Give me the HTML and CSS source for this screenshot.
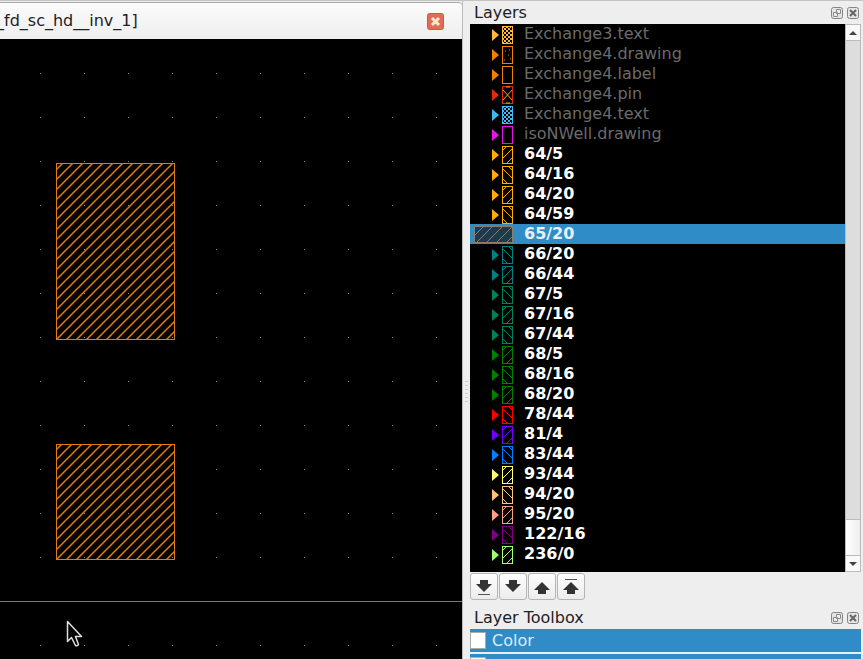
FILE: index.html
```
<!DOCTYPE html>
<html lang="en">
<head>
  <meta charset="UTF-8" />
  <meta name="viewport" content="width=device-width, initial-scale=1.0"/>
  <title>Layout Viewer</title>
  <link rel="stylesheet" href="styles.css">
</head>
<body>

<!-- Shared icons -->
<svg class="defs" aria-hidden="true">
  <symbol id="plain" viewBox="0 0 40 20">
    <path d="M18 5l7 6-7 6z" fill="currentColor"/>
    <rect x="28.500" y="2.500" width="10" height="17" fill="none" stroke="currentColor"/>
  </symbol>
  <symbol id="rise" viewBox="0 0 40 20">
    <use href="#plain"/>
    <path d="M29 14l9-9M29 6l3-3M33 19l5-5" fill="none" stroke="currentColor"/>
  </symbol>
  <symbol id="fall" viewBox="0 0 40 20">
    <use href="#plain"/>
    <path d="M29 5l9 9M29 15l4 4M35 3l3 3" fill="none" stroke="currentColor"/>
  </symbol>
  <symbol id="dots" viewBox="0 0 40 20">
    <use href="#plain"/>
    <path d="M31 7h1M35 6h1M34 11h1M30 16h1M36 15h1" stroke="currentColor"/>
  </symbol>
  <symbol id="cross" viewBox="0 0 40 20">
    <use href="#plain"/>
    <path d="M29 6l9 10M38 6l-9 10M32 3h4M32 19h4" stroke="#ff9a1f"/>
  </symbol>
  <symbol id="mesh" viewBox="0 0 40 20">
    <use href="#plain"/>
    <path d="M29 7l4-4M29 11l8-8M29 15l9-9M29 19l9-9M33 19l5-5M29 15l4 4M29 11l8 8M29 7l9 9M29 3l9 9M33 3l5 5" fill="none" stroke="currentColor"/>
  </symbol>
  <symbol id="float" viewBox="0 0 12 12">
    <rect x="0.500" y="0.500" width="11" height="11" rx="2" fill="#e4e4e4" stroke="#858585"/>
    <path d="M5.500 2.500h4v4h-4zM2.500 5.500h4v4h-4z" fill="#eee" stroke="#8a8a8a"/>
  </symbol>
  <symbol id="close" viewBox="0 0 12 12">
    <rect x="0.500" y="0.500" width="11" height="11" rx="2" fill="#e4e4e4" stroke="#858585"/>
    <path d="M3 3l6 6M9 3l-6 6" stroke="#666" stroke-width="2"/>
  </symbol>
</svg>

<div class="app">
  <main class="view">
    <header class="view-title">
      <span>_fd_sc_hd__inv_1]</span>
      <button class="view-close" aria-label="Close view">
        <svg width="17" height="17"><rect x="0.500" y="0.500" width="16" height="16" rx="2" fill="#e26c55" stroke="#cc5a45"/><path d="M5 5l7 7M12 5l-7 7" stroke="#ffe9cf" stroke-width="3"/></svg>
      </button>
    </header>
    <svg class="canvas" role="img" aria-label="Cell layout">
      <defs>
        <pattern id="grid" width="44" height="44" x="40" y="34" patternUnits="userSpaceOnUse">
          <rect width="1" height="1" fill="#888"/>
        </pattern>
        <pattern id="hatch" width="10" height="10" x="7" y="0" patternUnits="userSpaceOnUse">
          <path d="M-1 11L11 -1M-1 1L1 -1M9 11L11 9" fill="none" stroke="#e07c10" stroke-width="1.500"/>
        </pattern>
      </defs>
      <rect width="100%" height="100%" fill="#000"/>
      <rect width="100%" height="100%" fill="url(#grid)"/>
      <g fill="url(#hatch)" stroke="#e07c10">
        <rect x="56.500" y="124.500" width="118" height="176"/>
        <rect x="56.500" y="405.500" width="118" height="115"/>
      </g>
      <path d="M0 562.500h3000" stroke="#777"/>
      <path d="M67.500 582.500v20l4-4 4 8q2 1 3-1l-3-8h6z" fill="#000" stroke="#ddd" stroke-width="1.500" stroke-linejoin="round"/>
    </svg>
  </main>

  <div class="splitter"></div>

  <aside class="dock">
    <section class="panel">
      <header class="panel-title">
        <h2>Layers</h2>
        <button aria-label="Float layers"><svg><use href="#float"/></svg></button>
        <button aria-label="Close layers"><svg><use href="#close"/></svg></button>
      </header>
      <div class="list-box">
        <ul class="layers">
          <li class="off"><svg class="gold"><use href="#mesh"/></svg>Exchange3.text</li>
          <li class="off"><svg class="orange"><use href="#dots"/></svg>Exchange4.drawing</li>
          <li class="off"><svg class="orange"><use href="#plain"/></svg>Exchange4.label</li>
          <li class="off"><svg class="brick"><use href="#cross"/></svg>Exchange4.pin</li>
          <li class="off"><svg class="sky"><use href="#mesh"/></svg>Exchange4.text</li>
          <li class="off"><svg class="magenta"><use href="#plain"/></svg>isoNWell.drawing</li>
          <li><svg class="amber"><use href="#rise"/></svg>64/5</li>
          <li><svg class="amber"><use href="#fall"/></svg>64/16</li>
          <li><svg class="amber"><use href="#rise"/></svg>64/20</li>
          <li><svg class="amber"><use href="#fall"/></svg>64/59</li>
          <li class="selected">
            <svg viewBox="0 0 40 20"><rect x="0.500" y="2.500" width="38" height="16" fill="#1b3b55" stroke="#8c7d68"/><path d="M1 11l8-8M3 18l15-15M13 18l15-15M23 18l15-15M33 18l5-5" stroke="#8c7d68"/></svg>65/20
          </li>
          <li><svg class="teal"><use href="#fall"/></svg>66/20</li>
          <li><svg class="teal"><use href="#rise"/></svg>66/44</li>
          <li><svg class="sea"><use href="#fall"/></svg>67/5</li>
          <li><svg class="sea"><use href="#rise"/></svg>67/16</li>
          <li><svg class="sea"><use href="#fall"/></svg>67/44</li>
          <li><svg class="green"><use href="#rise"/></svg>68/5</li>
          <li><svg class="green"><use href="#fall"/></svg>68/16</li>
          <li><svg class="green"><use href="#rise"/></svg>68/20</li>
          <li><svg class="red"><use href="#fall"/></svg>78/44</li>
          <li><svg class="violet"><use href="#rise"/></svg>81/4</li>
          <li><svg class="blue"><use href="#fall"/></svg>83/44</li>
          <li><svg class="yellow"><use href="#rise"/></svg>93/44</li>
          <li><svg class="peach"><use href="#fall"/></svg>94/20</li>
          <li><svg class="salmon"><use href="#rise"/></svg>95/20</li>
          <li><svg class="purple"><use href="#fall"/></svg>122/16</li>
          <li><svg class="lime"><use href="#rise"/></svg>236/0</li>
        </ul>
        <div class="scrollbar">
          <button aria-label="Scroll up"><svg width="8" height="4"><path d="M0 4l4-4 4 4z" fill="#444"/></svg></button>
          <div class="track"></div>
          <div class="thumb"></div>
          <button aria-label="Scroll down"><svg width="8" height="4"><path d="M0 0l4 4 4-4z" fill="#444"/></svg></button>
        </div>
      </div>
      <div class="tools">
        <button aria-label="Move to bottom"><svg width="18" height="18"><path d="M5 2h8v4h4l-8 8-8-8h4z" fill="#333"/><path d="M3 16.500h12" stroke="#555"/></svg></button>
        <button aria-label="Move down"><svg width="18" height="18"><path d="M5 2h8v4h4l-8 8-8-8h4z" fill="#333"/></svg></button>
        <button aria-label="Move up"><svg width="18" height="18"><path d="M5 16h8v-4h4l-8-8-8 8h4z" fill="#333"/></svg></button>
        <button aria-label="Move to top"><svg width="18" height="18"><path d="M5 16h8v-4h4l-8-8-8 8h4z" fill="#333"/><path d="M3 1.500h12" stroke="#555"/></svg></button>
      </div>
    </section>

    <div class="handle"></div>

    <section class="panel">
      <header class="panel-title">
        <h2>Layer Toolbox</h2>
        <button aria-label="Float toolbox"><svg><use href="#float"/></svg></button>
        <button aria-label="Close toolbox"><svg><use href="#close"/></svg></button>
      </header>
      <div class="toolbox">
        <label><input type="checkbox">Color</label>
        <label><input type="checkbox" aria-label="Frame color"></label>
      </div>
    </section>
  </aside>
</div>

</body>
</html>
```
FILE: styles.css
```
* {
  box-sizing: border-box;
}

body {
  margin: 0;
  background: #eee;
  color: #1e2226;
  font: 16px/20px "DejaVu Sans", sans-serif;
  overflow: hidden;
}

button {
  display: flex;
  align-items: center;
  justify-content: center;
  padding: 0;
  border: none;
  background: none;
}

.defs {
  display: none;
}

.app {
  display: flex;
  height: 100vh;
  border-top: 1px solid #c4c4c4;
}

/* Layout view */
.view {
  display: flex;
  flex-direction: column;
  flex: 1;
  min-width: 0;
  padding-top: 1px;
}

.view-title {
  display: flex;
  align-items: center;
  justify-content: space-between;
  height: 37px;
  flex-shrink: 0;
  padding-right: 18px;
  border-top: 1px solid #aaa;
  border-radius: 0 4px 0 0;
  background: linear-gradient(#fbfbfb, #eee);
}

.view-title span {
  margin-left: -4px;
}

.canvas {
  display: block;
  width: 100%;
  flex: 1;
  min-height: 0;
}

.splitter {
  width: 8px;
  flex-shrink: 0;
  border-left: 1px solid #bbb;
  background: repeating-linear-gradient(#ccc 0 1px, transparent 1px 4px) center 380px / 3px 22px no-repeat;
}

/* Dock panels */
.dock {
  display: flex;
  flex-direction: column;
  width: 393px;
  flex-shrink: 0;
}

.panel-title {
  display: flex;
  align-items: center;
  gap: 4px;
  height: 23px;
  padding: 0 4px;
}

.panel-title h2 {
  flex: 1;
  margin: 0;
  font-size: 16px;
  font-weight: normal;
}

.panel-title svg {
  width: 12px;
  height: 12px;
}

.list-box {
  display: flex;
  height: 548px;
  margin-right: 2px;
}

.layers {
  flex: 1;
  margin: 0;
  padding: 0;
  list-style: none;
  background: #000;
  color: #fff;
  font-weight: bold;
}

.layers li {
  display: flex;
  align-items: center;
  gap: 10px;
  height: 20px;
  padding-left: 4px;
}

.layers svg {
  width: 40px;
  height: 20px;
}

.layers .off {
  color: #6b6b6b;
  font-weight: normal;
}

.layers .selected {
  background: #308cc6;
  color: #e4f2fc;
}

.gold { color: #ffb83d; }
.orange { color: #f08000; }
.brick { color: #e02a14; }
.sky { color: #3fb8f5; }
.magenta { color: #e815e8; }
.amber { color: #ffae00; }
.teal { color: #008080; }
.sea { color: #008058; }
.green { color: #008000; }
.red { color: #f00; }
.violet { color: #7000ff; }
.blue { color: #0080ff; }
.yellow { color: #ffff70; }
.peach { color: #ffc080; }
.salmon { color: #ff9d85; }
.purple { color: #800080; }
.lime { color: #a0ff70; }

.scrollbar {
  display: flex;
  flex-direction: column;
  width: 16px;
  border: 1px solid #bbb;
  background: #fafafa;
}

.scrollbar button {
  height: 15px;
}

.track {
  flex: 1;
  border: solid #bbb;
  border-width: 1px 0;
  background: #ddd;
}

.thumb {
  height: 36px;
  border-bottom: 1px solid #bbb;
  background: linear-gradient(90deg, #fff, #eee);
}

.tools {
  display: flex;
  gap: 1px;
  padding-top: 1px;
}

.tools button {
  width: 28px;
  height: 27px;
  border: 1px solid #b5b5b5;
  border-radius: 3px;
  background: linear-gradient(#fdfdfd, #ececec);
}

.handle {
  height: 6px;
  background: repeating-linear-gradient(90deg, #bbb 0 1px, transparent 1px 4px) center bottom / 22px 2px no-repeat;
}

.handle + .panel {
  padding-top: 6px;
}

/* Toolbox rows */
.toolbox {
  display: flex;
  flex-direction: column;
  gap: 2px;
  margin-right: 2px;
}

.toolbox label {
  display: flex;
  align-items: center;
  gap: 6px;
  height: 23px;
  background: #308cc6;
  color: #dceefa;
}

.toolbox input {
  appearance: none;
  width: 16px;
  height: 17px;
  margin: 0;
  border: 1px solid #aaa;
  background: #fff;
}
```
